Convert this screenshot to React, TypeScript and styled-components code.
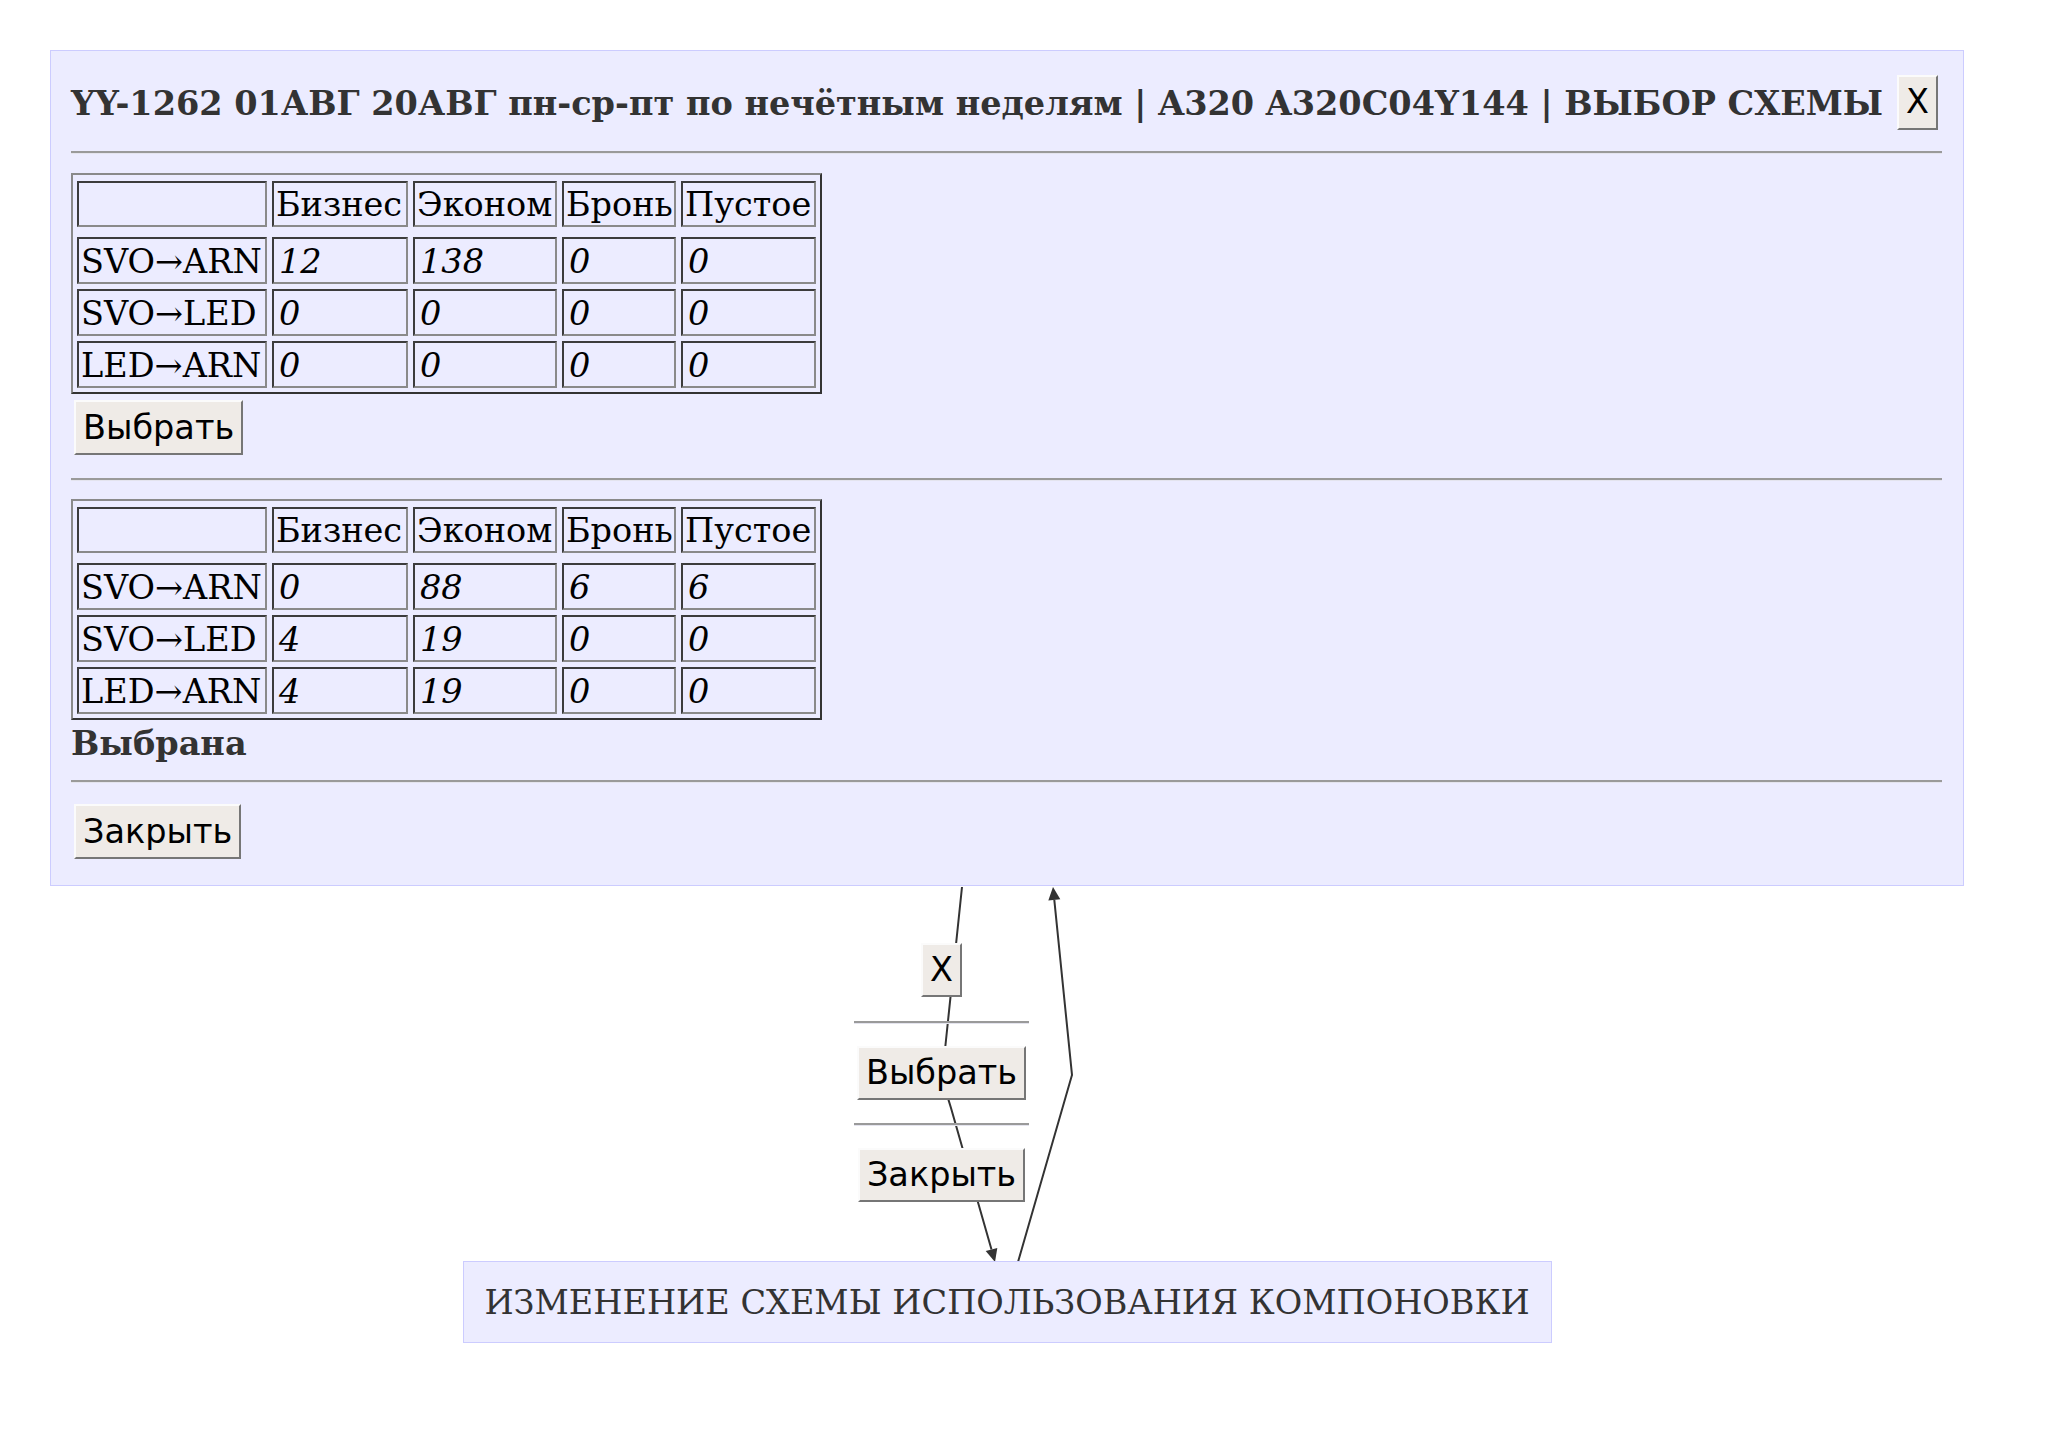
import React from "react";
import styled, { createGlobalStyle } from "styled-components";

const Global = createGlobalStyle`
  html, body { margin: 0; padding: 0; background: #ffffff; }
  body { font-family: "DejaVu Serif", serif; }
`;

const Diagram = styled.div`
  position: relative;
  width: 2048px;
  height: 1436px;
  padding: 50px 0 0 50px;
  box-sizing: border-box;
`;

const Column = styled.div`
  position: relative;
  z-index: 1;
  width: 1914px;
  display: flex;
  flex-direction: column;
  align-items: center;
`;

const MainNode = styled.div`
  box-sizing: border-box;
  width: 1914px;
  background: #ececff;
  border: 1px solid #ccccff;
  padding: 23px 21px 26px 20px;
  display: flex;
  flex-direction: column;
  align-items: flex-start;
  color: #333333;
`;

const TitleRow = styled.div`
  align-self: stretch;
  height: 56px;
  display: flex;
  align-items: center;
  justify-content: space-between;
`;

const Title = styled.span`
  padding-top: 2px;
  font-family: "DejaVu Serif", serif;
  font-weight: bold;
  font-size: 33.5px;
  white-space: nowrap;
  color: #333333;
`;

const Button = styled.button<{ $mt?: number; $mr?: number }>`
  box-sizing: border-box;
  height: 55px;
  margin: ${(p) => p.$mt ?? 0}px ${(p) => p.$mr ?? 0}px 0 3px;
  padding: 0 7px;
  font-family: "DejaVu Sans", sans-serif;
  font-size: 33.5px;
  color: #000000;
  background: #efebe7;
  border-style: solid;
  border-width: 2px;
  border-color: #fbfbfb #767676 #767676 #fbfbfb;
  border-radius: 0;
  line-height: 1;
  white-space: nowrap;
`;

const SmallButton = styled(Button)`
  height: 54px;
  margin: 0;
`;

const Rule = styled.hr<{ $mt: number; $mb: number }>`
  align-self: stretch;
  height: 0;
  margin: ${(p) => p.$mt}px 0 ${(p) => p.$mb}px 0;
  border: none;
  border-top: 2px solid #9a9a9a;
  border-bottom: 1px solid #e4e4ee;
`;

const Grid = styled.div`
  display: grid;
  grid-template-columns: 190px 136px 144px 114px 135px;
  column-gap: 5px;
  row-gap: 5px;
  padding: 6px 4px 4px 4px;
  border-style: solid;
  border-width: 2px;
  border-color: #8a8a8a #333333 #333333 #8a8a8a;
  font-family: "DejaVu Serif", serif;
  font-size: 33.5px;
  color: #000000;
`;

const Cell = styled.div<{ $head?: boolean; $num?: boolean }>`
  box-sizing: border-box;
  height: ${(p) => (p.$head ? 46 : 47)}px;
  margin-bottom: ${(p) => (p.$head ? 5 : 0)}px;
  border-style: solid;
  border-width: 2px;
  border-color: #3c3c3c #8a8a8a #8a8a8a #3c3c3c;
  padding: 1px 2px 0 ${(p) => (p.$num ? 5 : 2)}px;
  display: flex;
  align-items: center;
  font-style: ${(p) => (p.$num ? "italic" : "normal")};
  white-space: nowrap;
  overflow: hidden;
`;

const Selected = styled.div`
  margin-top: 2px;
  font-family: "DejaVu Serif", serif;
  font-weight: bold;
  font-size: 33.5px;
  line-height: 44px;
  color: #333333;
`;

const Middle = styled.div`
  align-self: stretch;
  box-sizing: border-box;
  height: 375px;
  padding: 57px 0 0 804px;
  display: flex;
  align-items: flex-start;
`;

const EdgeLabel = styled.div`
  width: 175px;
  display: flex;
  flex-direction: column;
  align-items: center;
`;

const BottomNode = styled.div`
  box-sizing: border-box;
  width: 1089px;
  height: 82px;
  background: #ececff;
  border: 1px solid #ccccff;
  display: flex;
  align-items: center;
  justify-content: center;
  font-family: "DejaVu Serif", serif;
  font-size: 33.5px;
  color: #333333;
  white-space: nowrap;
`;

const Edges = styled.svg`
  position: absolute;
  left: 0;
  top: 0;
  z-index: 0;
  pointer-events: none;
`;

type Row = [string, string, string, string, string];

const tables: Row[][] = [
  [
    ["SVO→ARN", "12", "138", "0", "0"],
    ["SVO→LED", "0", "0", "0", "0"],
    ["LED→ARN", "0", "0", "0", "0"],
  ],
  [
    ["SVO→ARN", "0", "88", "6", "6"],
    ["SVO→LED", "4", "19", "0", "0"],
    ["LED→ARN", "4", "19", "0", "0"],
  ],
];

const heads = ["", "Бизнес", "Эконом", "Бронь", "Пустое"];

function SeatTable({ rows }: { rows: Row[] }) {
  return (
    <Grid>
      {heads.map((h, i) => (
        <Cell key={"h" + i} $head>
          {h}
        </Cell>
      ))}
      {rows.map((r, ri) =>
        r.map((c, ci) => (
          <Cell key={ri + "-" + ci} $num={ci > 0}>
            {c}
          </Cell>
        ))
      )}
    </Grid>
  );
}

export default function App() {
  return (
    <>
      <Global />
      <Diagram>
        <Edges width={2048} height={1436} viewBox="0 0 2048 1436">
          <g fill="none" stroke="#333333" strokeWidth={2}>
            <path d="M962,887 L946,1040 C942,1075 945,1090 951,1108 L991.5,1249.5" />
            <path d="M1018,1262 L1072,1075 L1054.3,899.9" />
          </g>
          <g fill="#333333">
            <polygon points="995,1262 997.3,1247.9 985.7,1251.1" />
            <polygon points="1053,887 1060.3,899.3 1048.3,900.5" />
          </g>
        </Edges>
        <Column>
          <MainNode>
            <TitleRow>
              <Title>
                YY-1262 01АВГ 20АВГ пн-ср-пт по нечётным неделям | A320 A320C04Y144 | ВЫБОР СХЕМЫ
              </Title>
              <Button $mr={4}>X</Button>
            </TitleRow>
            <Rule $mt={21} $mb={19} />
            <SeatTable rows={tables[0]} />
            <Button $mt={6}>Выбрать</Button>
            <Rule $mt={23} $mb={18} />
            <SeatTable rows={tables[1]} />
            <Selected>Выбрана</Selected>
            <Rule $mt={14} $mb={21} />
            <Button>Закрыть</Button>
          </MainNode>
          <Middle>
            <EdgeLabel>
              <SmallButton>X</SmallButton>
              <Rule $mt={24} $mb={22} />
              <SmallButton>Выбрать</SmallButton>
              <Rule $mt={23} $mb={22} />
              <SmallButton>Закрыть</SmallButton>
            </EdgeLabel>
          </Middle>
          <BottomNode>ИЗМЕНЕНИЕ СХЕМЫ ИСПОЛЬЗОВАНИЯ КОМПОНОВКИ</BottomNode>
        </Column>
      </Diagram>
    </>
  );
}
